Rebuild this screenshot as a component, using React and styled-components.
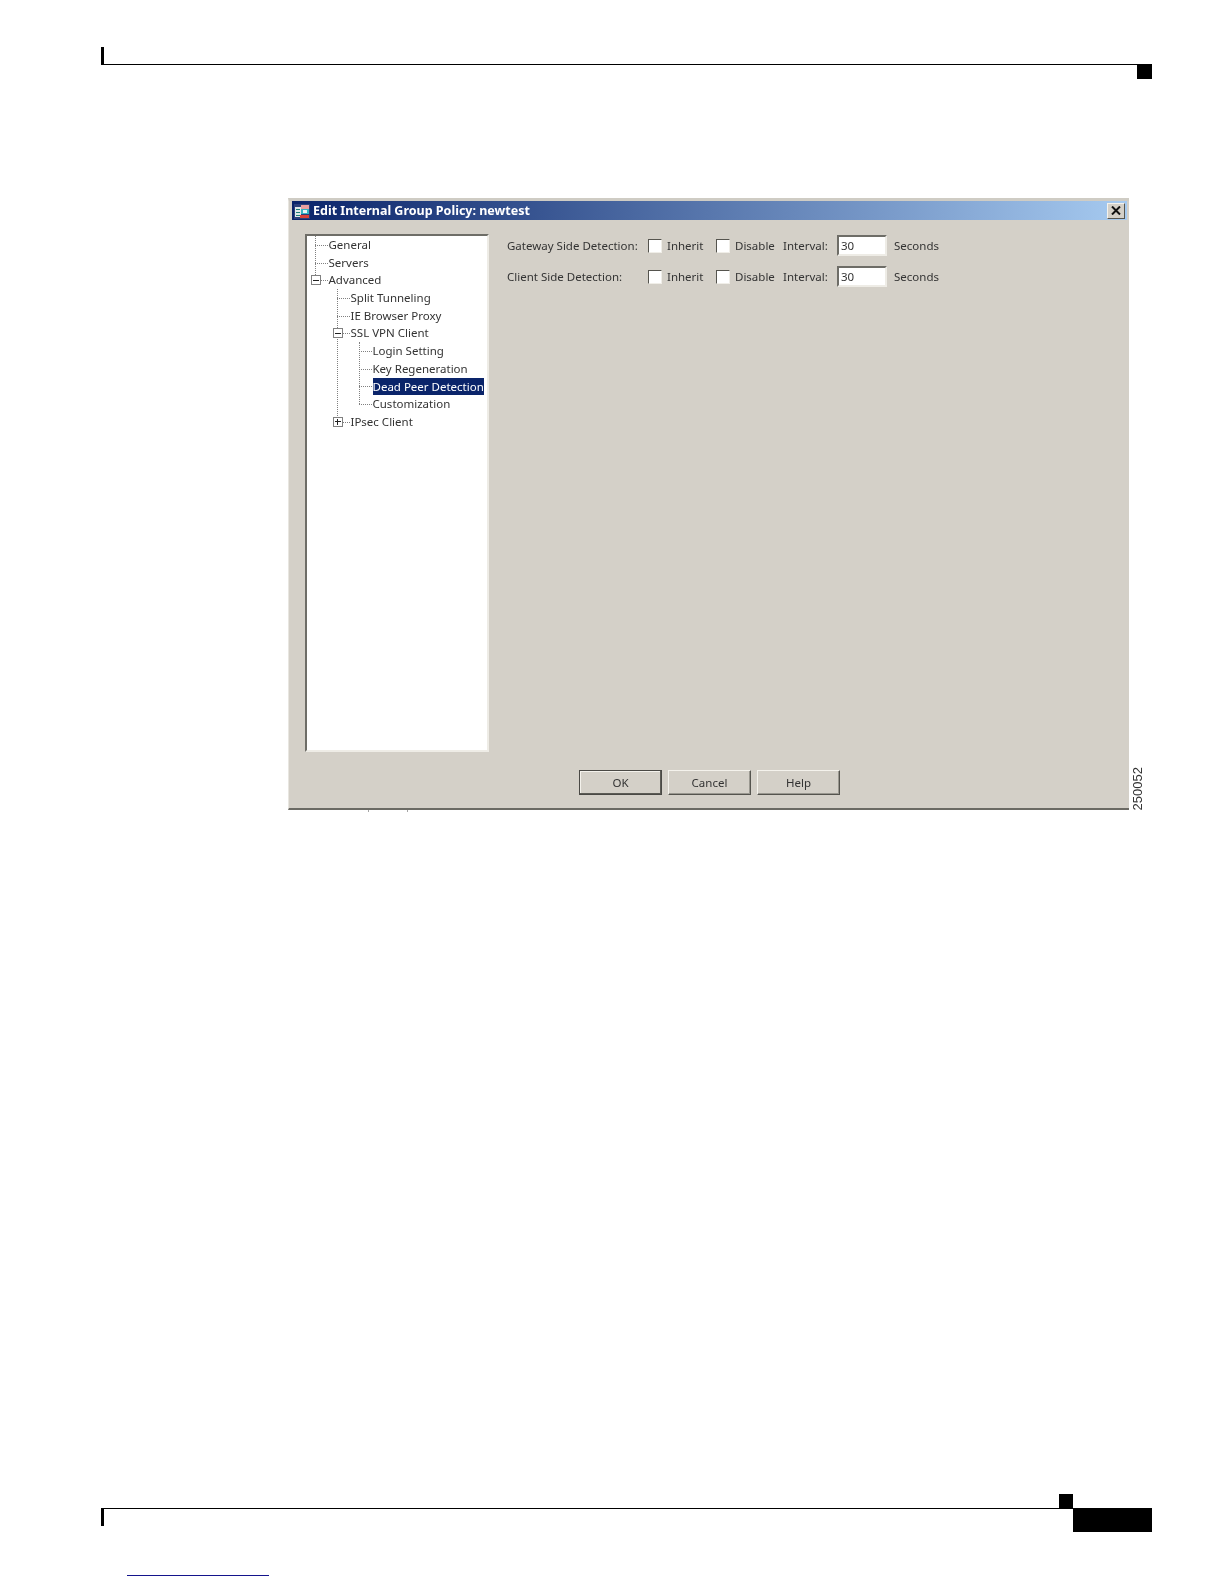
import React from 'react';
import styled, { createGlobalStyle } from 'styled-components';

const GlobalStyle = createGlobalStyle`
  html, body {
    margin: 0;
    padding: 0;
    background: #fff;
  }
`;

const Page = styled.div`
  width: 1224px;
  height: 1584px;
  overflow: hidden;
  display: flex;
  flex-direction: column;
  background: #fff;
`;

const Header = styled.header`
  display: flex;
  flex-direction: column;
  margin: 47px 72px 0 101px;
`;

const HeaderRule = styled.div`
  height: 17px;
  border-left: 3px solid #000;
  border-bottom: 1px solid #000;
`;

const HeaderTab = styled.div`
  align-self: flex-end;
  width: 15px;
  height: 14px;
  background: #000;
`;

const Figure = styled.section`
  display: flex;
  align-items: flex-end;
  margin: 119px 0 0 288px;
`;

const Dialog = styled.div`
  position: relative;
  width: 841px;
  height: 612px;
  box-sizing: border-box;
  display: flex;
  flex-direction: column;
  background: #d4d0c8;
  border-top: 3px solid #cfccc4;
  border-left: 1px solid #e8e6e0;
  border-bottom: 2px solid #6b6a64;
  padding: 0 2px 0 3px;
  font-family: 'Noto Sans', sans-serif;
  font-size: 11.5px;
  color: #333;
  filter: blur(0.25px);
`;

const DialogTail = styled.span`
  position: absolute;
  left: 79px;
  bottom: -4px;
  width: 40px;
  height: 2px;
  box-sizing: border-box;
  border-left: 1px solid #a5a5a5;
  border-right: 1px solid #a5a5a5;
`;

const TitleBar = styled.div`
  height: 19px;
  display: flex;
  align-items: center;
  gap: 2px;
  padding: 0 2px 0 1px;
  background: linear-gradient(90deg, #0a246a 0%, #a6caf0 100%);
  color: #fff;
  font-weight: 700;
  font-size: 12.5px;
`;

const TitleText = styled.span`
  flex: 1;
`;

const CloseButton = styled.button`
  width: 18px;
  height: 16px;
  padding: 0;
  display: flex;
  align-items: center;
  justify-content: center;
  background: #d4d0c8;
  border: 1px solid;
  border-color: #f4f2ec #55544e #55544e #f4f2ec;
`;

const Body = styled.div`
  flex: 1;
  display: flex;
  padding: 14px 0 0 13px;
  gap: 18px;
`;

const TreePanel = styled.div`
  width: 184px;
  height: 518px;
  box-sizing: border-box;
  background: #fff;
  border: 2px solid;
  border-color: #6e6d67 #eeece6 #eeece6 #6e6d67;
`;

const TreeGroup = styled.div`
  position: relative;
  margin-left: ${(p) => p.$indent}px;
  &::before {
    content: '';
    position: absolute;
    left: -14px;
    top: 0;
    bottom: ${(p) => p.$tail}px;
    border-left: 1px dotted #808080;
  }
`;

const TreeRow = styled.div`
  position: relative;
  height: 17.7px;
  line-height: 17.7px;
  white-space: nowrap;
  &::before {
    content: '';
    position: absolute;
    left: -14px;
    width: 13px;
    top: 50%;
    border-top: 1px dotted #808080;
  }
`;

const TreeLabel = styled.span`
  display: inline-block;
  height: 100%;
  background: ${(p) => (p.$selected ? '#0a246a' : 'transparent')};
  color: ${(p) => (p.$selected ? '#fff' : 'inherit')};
`;

const Expander = styled.span`
  position: absolute;
  z-index: 1;
  left: -18px;
  top: 4px;
  width: 10px;
  height: 10px;
  box-sizing: border-box;
  background: #fff;
  border: 1px solid #808080;
  &::before {
    content: '';
    position: absolute;
    left: 1px;
    right: 1px;
    top: 3.5px;
    height: 1px;
    background: #222;
  }
  &::after {
    content: '';
    display: ${(p) => (p.$open ? 'none' : 'block')};
    position: absolute;
    top: 1px;
    bottom: 1px;
    left: 3.5px;
    width: 1px;
    background: #222;
  }
`;

const Form = styled.div`
  display: flex;
  flex-direction: column;
  gap: 10px;
  padding-top: 1px;
`;

const FormRow = styled.div`
  height: 21px;
  display: flex;
  align-items: center;
`;

const RowLabel = styled.span`
  width: 141px;
`;

const CheckBox = styled.span`
  width: 14px;
  height: 14px;
  box-sizing: border-box;
  background: #fff;
  border: 1px solid;
  border-color: #55544e #f0eee8 #f0eee8 #55544e;
`;

const CheckLabel = styled.span`
  margin-left: 5px;
  width: ${(p) => p.$width}px;
`;

const IntervalInput = styled.span`
  width: 50px;
  height: 21px;
  box-sizing: border-box;
  margin: 0 7px 0 8px;
  padding-left: 2px;
  line-height: 17px;
  background: #fff;
  border: 2px solid;
  border-color: #6e6d67 #eeece6 #eeece6 #6e6d67;
`;

const IntervalLabel = styled.span`
  width: 46px;
`;

const Footer = styled.div`
  display: flex;
  gap: 6px;
  margin: 17px 0 13px 287px;
`;

const ActionButton = styled.button`
  width: 83px;
  height: 25px;
  padding: 0;
  font: inherit;
  color: inherit;
  background: #d4d0c8;
  border: 1px solid;
  border-color: ${(p) =>
    p.$primary ? '#4a4945' : '#f4f2ec #55544e #55544e #f4f2ec'};
  box-shadow: ${(p) =>
    p.$primary
      ? 'inset -1px -1px 0 #5c5b55, inset 1px 1px 0 #f4f2ec'
      : 'inset -1px -1px 0 #9a9890'};
`;

const FigureNumber = styled.span`
  writing-mode: vertical-rl;
  transform: rotate(180deg);
  margin-left: 2px;
  font-family: 'Liberation Sans', sans-serif;
  font-size: 13px;
  line-height: 14px;
  color: #333;
`;

const Spacer = styled.div`
  flex: 1;
`;

const Footnote = styled.footer`
  display: flex;
  flex-direction: column;
  margin: 0 72px 0 101px;
`;

const FooterTop = styled.div`
  display: flex;
  justify-content: flex-end;
  margin-right: 79px;
`;

const FooterTab = styled.div`
  width: 14px;
  height: 14px;
  background: #000;
`;

const FooterRow = styled.div`
  display: flex;
`;

const FooterRule = styled.div`
  flex: 1;
  height: 17px;
  border-left: 3px solid #000;
  border-top: 1px solid #000;
`;

const PageBlock = styled.div`
  width: 79px;
  height: 24px;
  background: #000;
`;

const LinkLine = styled.div`
  width: 142px;
  height: 1px;
  margin: 43px 0 8px 127px;
  background: #14148c;
`;

function AppIcon() {
  return (
    <svg width="18" height="18" viewBox="0 0 18 18">
      <rect x="1" y="2" width="16" height="15" fill="#2b3f7a" />
      <rect x="2" y="5" width="6" height="10" fill="#dfe8e8" />
      <rect x="3" y="7" width="4" height="1" fill="#1d7f7a" />
      <rect x="3" y="10" width="4" height="1" fill="#1d7f7a" />
      <rect x="3" y="13" width="4" height="1" fill="#1d7f7a" />
      <rect x="8" y="3" width="8" height="4" fill="#e8a0a0" />
      <rect x="8" y="7" width="8" height="5" fill="#35b5c4" />
      <rect x="10" y="8" width="4" height="3" fill="#e6f6f8" />
      <rect x="7" y="13" width="9" height="3" fill="#d8423a" />
    </svg>
  );
}

function CloseIcon() {
  return (
    <svg width="10" height="9" viewBox="0 0 10 9">
      <path d="M1 0.5 L9 8.5 M9 0.5 L1 8.5" stroke="#111" strokeWidth="2" fill="none" />
    </svg>
  );
}

function DetectionRow({ label }) {
  return (
    <FormRow>
      <RowLabel>{label}</RowLabel>
      <CheckBox />
      <CheckLabel $width={49}>Inherit</CheckLabel>
      <CheckBox />
      <CheckLabel $width={48}>Disable</CheckLabel>
      <IntervalLabel>Interval:</IntervalLabel>
      <IntervalInput>30</IntervalInput>
      <span>Seconds</span>
    </FormRow>
  );
}

export default function App() {
  return (
    <Page>
      <GlobalStyle />
      <Header>
        <HeaderRule />
        <HeaderTab />
      </Header>
      <Figure>
        <Dialog>
          <TitleBar>
            <AppIcon />
            <TitleText>Edit Internal Group Policy: newtest</TitleText>
            <CloseButton>
              <CloseIcon />
            </CloseButton>
          </TitleBar>
          <Body>
            <TreePanel>
              <TreeGroup $indent={21.5} $tail={150}>
                <TreeRow>General</TreeRow>
                <TreeRow>Servers</TreeRow>
                <TreeRow>
                  <Expander $open />
                  Advanced
                </TreeRow>
                <TreeGroup $indent={22} $tail={9}>
                  <TreeRow>Split Tunneling</TreeRow>
                  <TreeRow>IE Browser Proxy</TreeRow>
                  <TreeRow>
                    <Expander $open />
                    SSL VPN Client
                  </TreeRow>
                  <TreeGroup $indent={22} $tail={9}>
                    <TreeRow>Login Setting</TreeRow>
                    <TreeRow>Key Regeneration</TreeRow>
                    <TreeRow>
                      <TreeLabel $selected>Dead Peer Detection</TreeLabel>
                    </TreeRow>
                    <TreeRow>Customization</TreeRow>
                  </TreeGroup>
                  <TreeRow>
                    <Expander />
                    IPsec Client
                  </TreeRow>
                </TreeGroup>
              </TreeGroup>
            </TreePanel>
            <Form>
              <DetectionRow label="Gateway Side Detection:" />
              <DetectionRow label="Client Side Detection:" />
            </Form>
          </Body>
          <Footer>
            <ActionButton $primary>OK</ActionButton>
            <ActionButton>Cancel</ActionButton>
            <ActionButton>Help</ActionButton>
          </Footer>
          <DialogTail />
        </Dialog>
        <FigureNumber>250052</FigureNumber>
      </Figure>
      <Spacer />
      <Footnote>
        <FooterTop>
          <FooterTab />
        </FooterTop>
        <FooterRow>
          <FooterRule />
          <PageBlock />
        </FooterRow>
      </Footnote>
      <LinkLine />
    </Page>
  );
}
